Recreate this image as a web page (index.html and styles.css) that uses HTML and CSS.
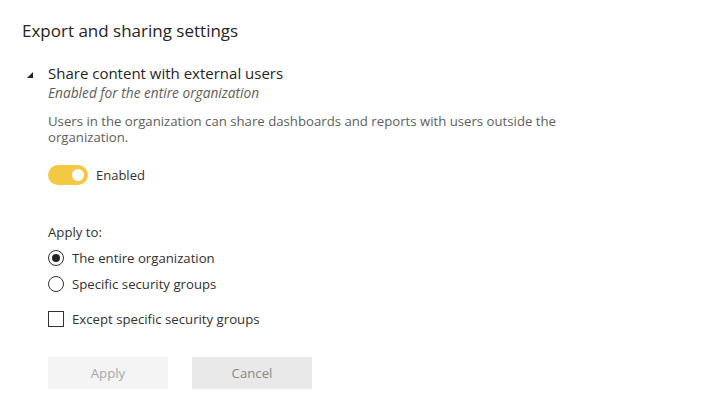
FILE: index.html
```html
<!DOCTYPE html>
<html lang="en">
<head>
<meta charset="utf-8">
<title>Export and sharing settings</title>
<link rel="stylesheet" href="styles.css">
</head>
<body>
<div class="page">
  <h1 class="title">Export and sharing settings</h1>
  <div class="setting">
    <div class="setting-head">
      <svg class="caret" width="6" height="6" viewBox="0 0 6 6" aria-hidden="true"><polygon points="6,0 6,6 0,6" fill="#252423"/></svg>
      <span class="setting-name">Share content with external users</span>
    </div>
    <div class="setting-body">
      <div class="status">Enabled for the entire organization</div>
      <p class="desc">Users in the organization can share dashboards and reports with users outside the organization.</p>
      <div class="toggle-row">
        <span class="toggle"><span class="knob"></span></span>
        <span class="toggle-label">Enabled</span>
      </div>
      <div class="apply-label">Apply to:</div>
      <div class="choices">
        <div class="choice"><span class="radio checked"></span><span>The entire organization</span></div>
        <div class="choice"><span class="radio"></span><span>Specific security groups</span></div>
      </div>
      <div class="choice check-row"><span class="checkbox"></span><span>Except specific security groups</span></div>
      <div class="buttons">
        <button class="btn btn-apply" type="button">Apply</button>
        <button class="btn btn-cancel" type="button">Cancel</button>
      </div>
    </div>
  </div>
</div>
</body>
</html>
```
FILE: styles.css
```css
html, body {
  margin: 0;
  padding: 0;
  background: #ffffff;
}
body {
  font-family: "Open Sans", "Noto Sans", sans-serif;
  color: #323130;
}
.page {
  padding: 19px 22px 0 22px;
}
.title {
  margin: 0;
  font-size: 17px;
  font-weight: 400;
  line-height: 24px;
  color: #252423;
}
.setting {
  margin-top: 20px;
}
.setting-head {
  display: flex;
  align-items: center;
  height: 21px;
}
.caret {
  margin-left: 5px;
  margin-right: 15px;
  margin-top: 2px;
}
.setting-name {
  font-size: 15px;
  line-height: 21px;
  color: #252423;
}
.setting-body {
  padding-left: 26px;
}
.status {
  font-size: 13.7px;
  font-style: italic;
  line-height: 18px;
  color: #605e5c;
}
.desc {
  margin: 12px 0 0 0;
  width: 530px;
  font-size: 13.2px;
  line-height: 15.5px;
  color: #605e5c;
}
.toggle-row {
  display: flex;
  align-items: center;
  margin-top: 20px;
  height: 20px;
}
.toggle {
  display: flex;
  align-items: center;
  justify-content: flex-end;
  box-sizing: border-box;
  width: 40px;
  height: 20px;
  padding-right: 4px;
  border-radius: 10px;
  background: #f3c843;
}
.knob {
  width: 12px;
  height: 12px;
  border-radius: 50%;
  background: #ffffff;
}
.toggle-label {
  margin-left: 8px;
  font-size: 13px;
  color: #323130;
}
.apply-label {
  margin-top: 37px;
  font-size: 13.2px;
  line-height: 20px;
}
.choices {
  margin-top: 3px;
}
.choice {
  display: flex;
  align-items: center;
  height: 26px;
  font-size: 13.2px;
  gap: 8px;
}
.radio {
  box-sizing: border-box;
  width: 16px;
  height: 16px;
  border: 1px solid #323130;
  border-radius: 50%;
  display: flex;
  align-items: center;
  justify-content: center;
}
.radio.checked::after {
  content: "";
  width: 8px;
  height: 8px;
  border-radius: 50%;
  background: #252423;
}
.check-row {
  margin-top: 9px;
}
.checkbox {
  box-sizing: border-box;
  width: 16px;
  height: 16px;
  border: 1px solid #323130;
}
.buttons {
  display: flex;
  gap: 24px;
  margin-top: 25px;
}
.btn {
  width: 120px;
  height: 32px;
  border: none;
  padding: 0;
  font-family: inherit;
  font-size: 13.2px;
}
.btn-apply {
  background: #f4f4f4;
  color: #a6a6a6;
}
.btn-cancel {
  background: #e9e9e9;
  color: #8a8886;
}
```
